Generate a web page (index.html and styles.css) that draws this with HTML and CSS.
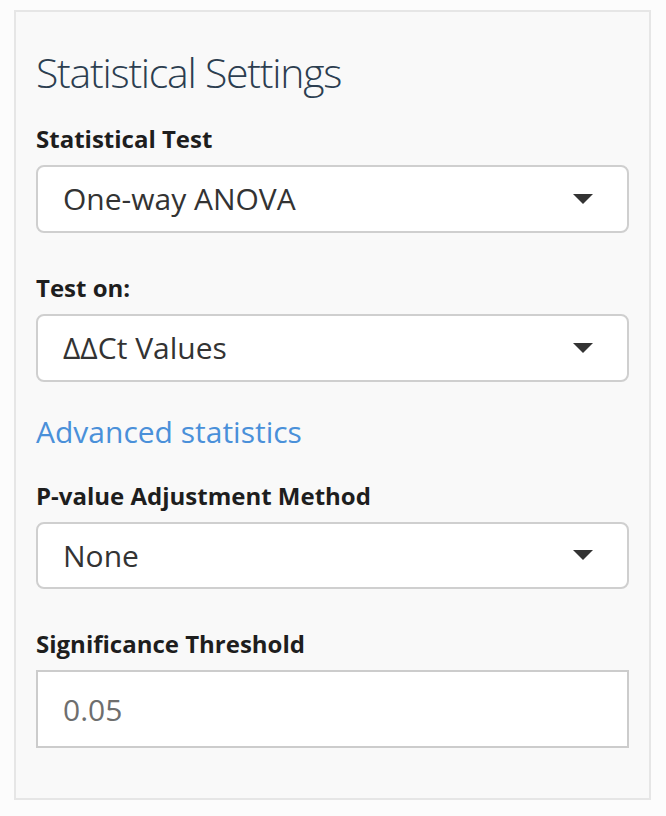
FILE: index.html
```html
<!DOCTYPE html>
<html lang="en">
<head>
<meta charset="utf-8">
<title>Statistical Settings</title>
<link rel="stylesheet" href="styles.css">
</head>
<body>
<div class="well">
  <h3 class="title">Statistical Settings</h3>
  <label class="lbl">Statistical Test</label>
  <div class="select"><span class="val">One-way ANOVA</span><span class="caret"></span></div>
  <label class="lbl gap">Test on:</label>
  <div class="select"><span class="val">ΔΔCt Values</span><span class="caret"></span></div>
  <a class="link" href="#">Advanced statistics</a>
  <label class="lbl">P-value Adjustment Method</label>
  <div class="select"><span class="val">None</span><span class="caret"></span></div>
  <label class="lbl gap">Significance Threshold</label>
  <div class="input"><span class="num">0.05</span></div>
</div>
</body>
</html>
```
FILE: styles.css
```css
html, body {
  margin: 0;
  padding: 0;
  background: #fcfcfc;
}
body {
  font-family: "Open Sans", "DejaVu Sans", sans-serif;
  color: #333;
}
.well {
  box-sizing: border-box;
  margin: 10px 0 0 14px;
  width: 637px;
  height: 790px;
  border: 2px solid #e6e6e6;
  background: #f9f9f9;
  padding: 36px 20px 50px 20px;
  display: flex;
  flex-direction: column;
}
.title {
  margin: 0;
  font-size: 41px;
  font-weight: 300;
  line-height: 48px;
  letter-spacing: -1.25px;
  color: #2c3e50;
}
.lbl {
  display: block;
  font-size: 24px;
  font-weight: 700;
  line-height: 30px;
  color: #1e1e1e;
  margin-top: 28px;
  margin-bottom: 11px;
}
.lbl.gap {
  margin-top: 40px;
}
.select {
  box-sizing: border-box;
  height: 68px;
  border: 2px solid #cfcfcf;
  border-radius: 8px;
  background: #fff;
  display: flex;
  align-items: center;
  justify-content: space-between;
  padding: 0 34px 0 25px;
}
.val {
  font-size: 30px;
  color: #333;
}
.caret {
  width: 0;
  height: 0;
  border-left: 10px solid transparent;
  border-right: 10px solid transparent;
  border-top: 10px solid #333;
}
.link {
  display: block;
  margin-top: 30px;
  font-size: 30px;
  line-height: 40px;
  color: #4a90d9;
  text-decoration: none;
}
.link + .lbl {
  margin-top: 29px;
}
.input {
  box-sizing: border-box;
  height: 78px;
  border: 2px solid #cccccc;
  background: #fff;
  display: flex;
  align-items: center;
  padding-left: 25px;
}
.num {
  font-size: 30px;
  color: #6e6e6e;
}
```
